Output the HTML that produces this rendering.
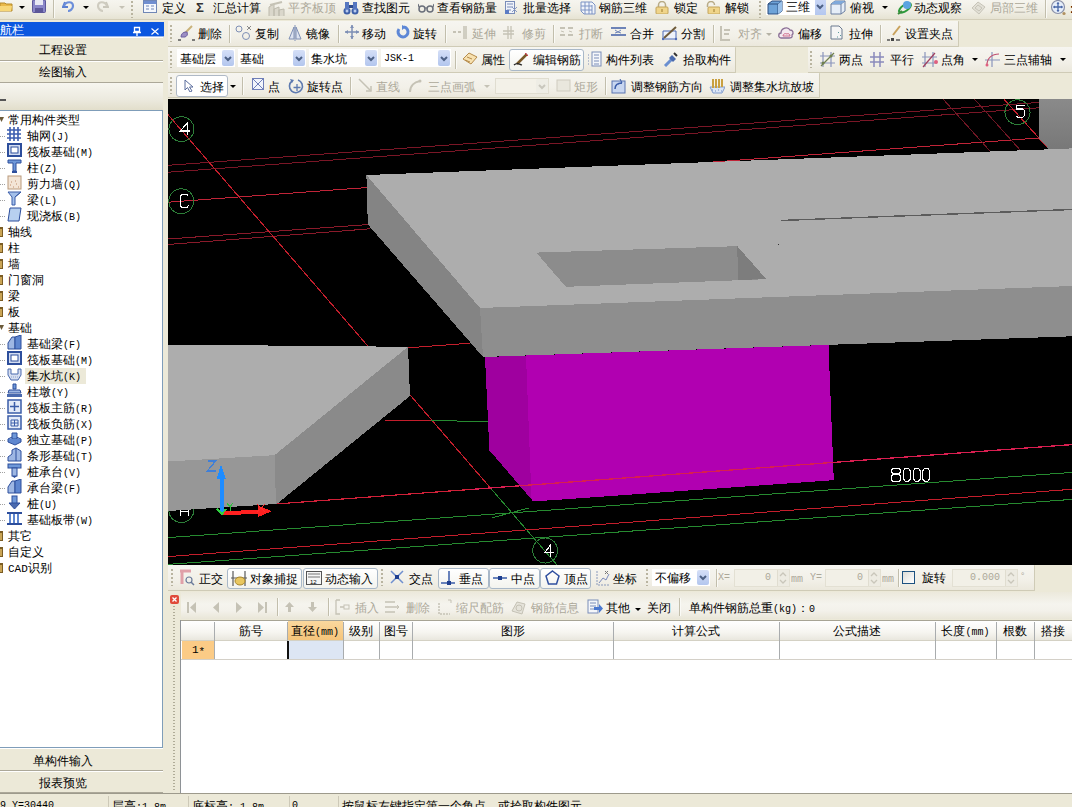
<!DOCTYPE html><html><head><meta charset="utf-8"><title>GGJ</title><style>
*{margin:0;padding:0;box-sizing:border-box}
html,body{width:1072px;height:807px;overflow:hidden}
body{background:#ECE9D8;font-family:"Liberation Sans",sans-serif;font-size:12px;color:#000;position:relative}
.a{position:absolute}
.t{position:absolute;white-space:nowrap;line-height:14px;height:14px}
.m{font-family:"Liberation Mono",monospace;font-size:10px}
.d{color:#ACA899}
.tb{position:absolute;background:linear-gradient(#F6F5F0,#F2F0E8 60%,#EBE8DC);border-bottom:1px solid #CFCBB6;border-right:1px solid #CFCBB6;border-radius:0 1px 1px 0}
.grip{position:absolute;width:2px;background:repeating-linear-gradient(#B9B4A0 0 2px,transparent 2px 4px)}
.sep{position:absolute;width:2px;background:#C2BEAC;border-right:1px solid #FAFAF6}
.btn{position:absolute;border:1px solid #A9B8C8;border-radius:3px;background:linear-gradient(#FFFFFF,#F3F3EE)}
.ic{position:absolute}
.tri{position:absolute;width:0;height:0;border-left:3px solid transparent;border-right:3px solid transparent;border-top:3px solid #000}
</style></head><body>
<div class="a" style="left:0;top:0;width:1072px;height:20px;background:linear-gradient(#F6F5EF,#EFEDE3 60%,#E6E3D3);border-bottom:1px solid #D3CEB9"></div>
<svg class="ic" style="left:0px;top:0px;" width="13" height="12" viewBox="0 0 13 12"><path d="M0 3h5l1 1h6v7H0z" fill="#E9B949" stroke="#B58A2A"/><path d="M0 6h12l-1 5H0z" fill="#F7D778"/></svg>
<div class="tri" style="left:19px;top:6px;border-top-color:#000"></div>
<svg class="ic" style="left:32px;top:0px;" width="14" height="13" viewBox="0 0 14 13"><rect x="0.5" y="0" width="13" height="12.5" rx="1" fill="#8A86C8" stroke="#5C5799"/><rect x="3" y="0" width="8" height="5" fill="#E8E8F4"/><rect x="3" y="8" width="8" height="4.5" fill="#5C5799"/></svg>
<div class="sep" style="left:53px;top:0px;height:18px"></div>
<svg class="ic" style="left:62px;top:0px;" width="13" height="12" viewBox="0 0 13 12"><path d="M3 2 L1 7 L6 7" fill="none" stroke="#5B7FD0" stroke-width="2"/><path d="M2 6 C4 1,11 1,11 6 C11 9,8 11,6 11" fill="none" stroke="#6D8FDA" stroke-width="2.2"/></svg>
<div class="tri" style="left:83px;top:6px;border-top-color:#000"></div>
<svg class="ic" style="left:97px;top:0px;" width="12" height="12" viewBox="0 0 12 12"><path d="M9 2 L11 7 L6 7" fill="none" stroke="#C9C6BA" stroke-width="2"/><path d="M10 6 C8 1,1 1,1 6 C1 9,4 11,6 11" fill="none" stroke="#CFCCC0" stroke-width="2.2"/></svg>
<div class="tri" style="left:119px;top:6px;border-top-color:#C5C2B5"></div>
<div class="grip" style="left:131px;top:1px;height:17px"></div>
<svg class="ic" style="left:143px;top:0px;" width="14" height="13" viewBox="0 0 14 13"><rect x="0.5" y="0.5" width="13" height="12" fill="#F4F7FC" stroke="#6F86B5"/><rect x="1" y="1" width="12" height="3" fill="#6F8ED0"/><path d="M3 6h3M8 6h3M3 9h3M8 9h3" stroke="#6F86B5" stroke-width="1.2"/></svg>
<div class="t " style="left:162px;top:1px;">定义</div>
<div class="t" style="left:196px;top:1px;font-size:13px;font-weight:bold;color:#333">&Sigma;</div>
<div class="t " style="left:213px;top:1px;">汇总计算</div>
<svg class="ic" style="left:268px;top:1px;" width="17" height="16" viewBox="0 0 17 16"><path d="M1 15V6l5-3v12M6 15V8l5-2v9M11 15V9l5-1v7" fill="#DAD7CB" stroke="#BDBAAD"/><path d="M2 4 L14 1" stroke="#C5C2B5" stroke-width="2"/></svg>
<div class="t d" style="left:288px;top:1px;">平齐板顶</div>
<svg class="ic" style="left:343px;top:1px;" width="16" height="14" viewBox="0 0 16 14"><circle cx="4" cy="10" r="3.5" fill="#3D5FA8"/><circle cx="12" cy="10" r="3.5" fill="#3D5FA8"/><rect x="2" y="1" width="4" height="8" fill="#5677C0"/><rect x="10" y="1" width="4" height="8" fill="#5677C0"/><rect x="6" y="4" width="4" height="3" fill="#2F4B8C"/><circle cx="4" cy="10" r="1.5" fill="#B9CBEF"/><circle cx="12" cy="10" r="1.5" fill="#B9CBEF"/></svg>
<div class="t " style="left:362px;top:1px;">查找图元</div>
<svg class="ic" style="left:418px;top:3px;" width="16" height="10" viewBox="0 0 16 10"><circle cx="4" cy="6" r="3" fill="none" stroke="#6A6F7A" stroke-width="1.5"/><circle cx="12" cy="6" r="3" fill="none" stroke="#6A6F7A" stroke-width="1.5"/><path d="M7 5h2M1 4L0 1M15 4l1-3" stroke="#6A6F7A" stroke-width="1.2"/></svg>
<div class="t " style="left:437px;top:1px;">查看钢筋量</div>
<svg class="ic" style="left:505px;top:0px;" width="13" height="15" viewBox="0 0 13 15"><rect x="0.5" y="1.5" width="9" height="12" fill="#F0F3FA" stroke="#7A8DB8"/><path d="M2 4h6M2 7h6M2 10h4" stroke="#7A8DB8"/><rect x="0" y="10" width="4" height="4" fill="#5C7CC4"/><path d="M7 7l5 5M12 7l-5 5" stroke="#8A9AC4"/></svg>
<div class="t " style="left:523px;top:1px;">批量选择</div>
<svg class="ic" style="left:580px;top:0px;" width="16" height="15" viewBox="0 0 16 15"><path d="M1 2h11l3 3v9H4L1 11z" fill="#F1F4FA" stroke="#7C93C4"/><path d="M1 6h11M1 10h11M5 2v12M9 2v12M12 5v9" stroke="#7C93C4"/></svg>
<div class="t " style="left:599px;top:1px;">钢筋三维</div>
<svg class="ic" style="left:655px;top:1px;" width="14" height="13" viewBox="0 0 14 13"><path d="M3.5 6V4a3.5 3.5 0 0 1 7 0v2" fill="none" stroke="#B8AB86" stroke-width="1.5"/><rect x="1" y="6" width="12" height="7" rx="1" fill="#F0D58A" stroke="#C2A45C"/><path d="M7 8v3" stroke="#9C7A2C"/></svg>
<div class="t " style="left:674px;top:1px;">锁定</div>
<svg class="ic" style="left:706px;top:1px;" width="14" height="13" viewBox="0 0 14 13"><path d="M1.5 6V4a3.5 3.5 0 0 1 7 0" fill="none" stroke="#B8AB86" stroke-width="1.5"/><rect x="2" y="6" width="12" height="7" rx="1" fill="#F0D58A" stroke="#C2A45C"/><path d="M8 8v3" stroke="#9C7A2C"/></svg>
<div class="t " style="left:725px;top:1px;">解锁</div>
<div class="grip" style="left:759px;top:1px;height:17px"></div>
<div class="a" style="left:766px;top:0;width:60px;height:15px;background:#fff"></div>
<svg class="ic" style="left:767px;top:0px;" width="16" height="15" viewBox="0 0 16 15"><path d="M1 4l4-3h10v10l-4 3H1z" fill="#6EA3D8" stroke="#2C4C7C"/><path d="M1 4h10v10M11 4l4-3" fill="none" stroke="#2C4C7C"/><path d="M11 4v10l4-3V1z" fill="#9CC2EA"/></svg>
<div class="t " style="left:786px;top:0px;">三维</div>
<div class="a" style="left:814px;top:0;width:12px;height:15px;background:linear-gradient(#C9D6F5,#B4C7EF);border-left:1px solid #fff"></div>
<svg class="ic" style="left:816px;top:4px;" width="8" height="6" viewBox="0 0 8 6"><path d="M1 1l3 3 3-3" fill="none" stroke="#4D6185" stroke-width="2"/></svg>
<svg class="ic" style="left:830px;top:0px;" width="16" height="15" viewBox="0 0 16 15"><path d="M1 4l4-3h10v10l-4 3H1z" fill="#E6EEF8" stroke="#6B7EA0"/><path d="M1 4h10v10M11 4l4-3" fill="none" stroke="#6B7EA0"/><path d="M1 4l4-3h10l-4 3z" fill="#7FA9DB"/></svg>
<div class="t " style="left:850px;top:1px;">俯视</div>
<div class="tri" style="left:882px;top:6px;border-top-color:#000"></div>
<svg class="ic" style="left:897px;top:0px;" width="16" height="16" viewBox="0 0 16 16"><ellipse cx="8" cy="8" rx="7" ry="3" transform="rotate(-35 8 8)" fill="none" stroke="#2C9A3C" stroke-width="2"/><circle cx="10" cy="5" r="4" fill="#5BA3E0"/><path d="M1 14l4-3" stroke="#3C8C3C" stroke-width="2"/></svg>
<div class="t " style="left:914px;top:1px;">动态观察</div>
<svg class="ic" style="left:970px;top:0px;" width="16" height="16" viewBox="0 0 16 16"><path d="M2 8l6-6 7 5-6 7z" fill="#E2E0D6" stroke="#C7C4B8"/><path d="M5 8l3-3 4 3-3 3z" fill="none" stroke="#C7C4B8"/></svg>
<div class="t d" style="left:990px;top:1px;">局部三维</div>
<div class="sep" style="left:1045px;top:0px;height:18px"></div>
<svg class="ic" style="left:1050px;top:0px;" width="17" height="16" viewBox="0 0 17 16"><circle cx="8" cy="7" r="6.5" fill="#E6EEFA" stroke="#8A90A8" stroke-width="1.2"/><path d="M8 2.5v9M3.5 7h9" stroke="#4A68A8" stroke-width="1.3"/><path d="M8 2l-1.5 2h3zM8 12l-1.5-2h3zM3 7l2-1.5v3zM13 7l-2-1.5v3z" fill="#4A68A8"/><circle cx="14" cy="13.5" r="1.6" fill="#B09060"/></svg>
<div class="t" style="left:1070px;top:2px;font-weight:bold">:</div>
<div class="a" style="left:0;top:22px;width:164px;height:15px;background:#0B57E0;border-bottom:1px solid #9DB9EB"></div>
<div class="t" style="left:0;top:23px;color:#fff">航栏</div>
<svg class="ic" style="left:133px;top:26px;" width="8" height="10" viewBox="0 0 8 10"><path d="M1.5 1.5h5v4h-5z" stroke="#fff" stroke-width="1.3" fill="none"/><path d="M0 6.5h8M4 6v4" stroke="#fff" stroke-width="1.3"/></svg>
<svg class="ic" style="left:151px;top:28px;" width="8" height="7" viewBox="0 0 8 7"><path d="M0.5 0.5l7 6M7.5 0.5l-7 6" stroke="#fff" stroke-width="1.1"/></svg>
<div class="a" style="left:0;top:37px;width:163px;height:24px;background:#ECE9D8;border-top:1px solid #fff;border-bottom:1px solid #ACA899"></div>
<div class="t " style="left:39px;top:43px;">工程设置</div>
<div class="a" style="left:0;top:61px;width:163px;height:22px;background:#ECE9D8;border-top:1px solid #fff;border-bottom:1px solid #ACA899"></div>
<div class="t " style="left:39px;top:65px;">绘图输入</div>
<div class="a" style="left:0;top:83px;width:163px;height:27px;background:linear-gradient(#F7F6F0,#ECEADF 60%,#E2DECB)"></div>
<div class="a" style="left:0;top:99px;width:6px;height:2px;background:#555"></div>
<div class="a" style="left:0;top:110px;width:163px;height:638px;background:#fff;border-top:1px solid #7F9DB9;border-right:1px solid #7F9DB9;border-bottom:1px solid #7F9DB9"></div>
<div class="a" style="left:25px;top:368px;width:61px;height:16px;background:#ECE9D8"></div>
<svg class="ic" style="left:0px;top:117px;" width="4" height="6" viewBox="0 0 4 6"><path d="M-1 0h5L1.5 5z" fill="#6B5A3A"/></svg>
<div class="t " style="left:8px;top:113px;">常用构件类型</div>
<div class="a" style="left:0;top:136px;width:6px;height:1px;background:repeating-linear-gradient(90deg,#A0A0A0 0 1px,transparent 1px 2px)"></div>
<svg class="ic" style="left:7px;top:127px;" width="15" height="15" viewBox="0 0 15 15"><path d="M3 0v14M7 0v14M11 0v14M0 3h14M0 7h14M0 11h14" stroke="#3B5DB0" stroke-width="1.6"/></svg>
<div class="t" style="left:27px;top:129px">轴网<span class="m">(J)</span></div>
<div class="a" style="left:0;top:152px;width:6px;height:1px;background:repeating-linear-gradient(90deg,#A0A0A0 0 1px,transparent 1px 2px)"></div>
<svg class="ic" style="left:7px;top:143px;" width="15" height="15" viewBox="0 0 15 15"><rect x="1" y="1" width="13" height="12" fill="#D3DDF2" stroke="#2D4E9C" stroke-width="2"/><rect x="4" y="4" width="7" height="6" fill="#fff" stroke="#2D4E9C"/></svg>
<div class="t" style="left:27px;top:145px">筏板基础<span class="m">(M)</span></div>
<div class="a" style="left:0;top:168px;width:6px;height:1px;background:repeating-linear-gradient(90deg,#A0A0A0 0 1px,transparent 1px 2px)"></div>
<svg class="ic" style="left:7px;top:159px;" width="15" height="15" viewBox="0 0 15 15"><path d="M1 1h13v3H9v8H6V4H1z" fill="#6F98D8" stroke="#2D4E9C"/><rect x="5" y="12" width="5" height="2" fill="#2D4E9C"/></svg>
<div class="t" style="left:27px;top:161px">柱<span class="m">(Z)</span></div>
<div class="a" style="left:0;top:184px;width:6px;height:1px;background:repeating-linear-gradient(90deg,#A0A0A0 0 1px,transparent 1px 2px)"></div>
<svg class="ic" style="left:7px;top:175px;" width="15" height="15" viewBox="0 0 15 15"><rect x="1" y="1" width="13" height="13" fill="#F3E5D6" stroke="#B99A7D"/><path d="M3 10h1M6 12h1M9 9h1M11 12h1M4 7h1M8 6h1" stroke="#C08C6A"/></svg>
<div class="t" style="left:27px;top:177px">剪力墙<span class="m">(Q)</span></div>
<div class="a" style="left:0;top:200px;width:6px;height:1px;background:repeating-linear-gradient(90deg,#A0A0A0 0 1px,transparent 1px 2px)"></div>
<svg class="ic" style="left:7px;top:191px;" width="15" height="15" viewBox="0 0 15 15"><path d="M1 1h13L8 6v8H5V6z" fill="#A4C0EA" stroke="#3A5CA8"/><path d="M8 6l6-5" stroke="#3A5CA8"/></svg>
<div class="t" style="left:27px;top:193px">梁<span class="m">(L)</span></div>
<div class="a" style="left:0;top:216px;width:6px;height:1px;background:repeating-linear-gradient(90deg,#A0A0A0 0 1px,transparent 1px 2px)"></div>
<svg class="ic" style="left:7px;top:207px;" width="15" height="15" viewBox="0 0 15 15"><path d="M3 1h11l-2 13H1z" fill="#B7D0F0" stroke="#2D4E9C"/></svg>
<div class="t" style="left:27px;top:209px">现浇板<span class="m">(B)</span></div>
<svg class="ic" style="left:0px;top:226px;" width="4" height="11" viewBox="0 0 4 11"><rect x="0" y="1" width="3" height="10" fill="#7A5C24"/><rect x="0" y="3" width="2" height="7" fill="#C9A455"/></svg>
<div class="t " style="left:8px;top:225px;">轴线</div>
<svg class="ic" style="left:0px;top:242px;" width="4" height="11" viewBox="0 0 4 11"><rect x="0" y="1" width="3" height="10" fill="#7A5C24"/><rect x="0" y="3" width="2" height="7" fill="#C9A455"/></svg>
<div class="t " style="left:8px;top:241px;">柱</div>
<svg class="ic" style="left:0px;top:258px;" width="4" height="11" viewBox="0 0 4 11"><rect x="0" y="1" width="3" height="10" fill="#7A5C24"/><rect x="0" y="3" width="2" height="7" fill="#C9A455"/></svg>
<div class="t " style="left:8px;top:257px;">墙</div>
<svg class="ic" style="left:0px;top:274px;" width="4" height="11" viewBox="0 0 4 11"><rect x="0" y="1" width="3" height="10" fill="#7A5C24"/><rect x="0" y="3" width="2" height="7" fill="#C9A455"/></svg>
<div class="t " style="left:8px;top:273px;">门窗洞</div>
<svg class="ic" style="left:0px;top:290px;" width="4" height="11" viewBox="0 0 4 11"><rect x="0" y="1" width="3" height="10" fill="#7A5C24"/><rect x="0" y="3" width="2" height="7" fill="#C9A455"/></svg>
<div class="t " style="left:8px;top:289px;">梁</div>
<svg class="ic" style="left:0px;top:306px;" width="4" height="11" viewBox="0 0 4 11"><rect x="0" y="1" width="3" height="10" fill="#7A5C24"/><rect x="0" y="3" width="2" height="7" fill="#C9A455"/></svg>
<div class="t " style="left:8px;top:305px;">板</div>
<svg class="ic" style="left:0px;top:325px;" width="4" height="6" viewBox="0 0 4 6"><path d="M-1 0h5L1.5 5z" fill="#6B5A3A"/></svg>
<div class="t " style="left:8px;top:321px;">基础</div>
<div class="a" style="left:0;top:344px;width:6px;height:1px;background:repeating-linear-gradient(90deg,#A0A0A0 0 1px,transparent 1px 2px)"></div>
<svg class="ic" style="left:7px;top:335px;" width="15" height="15" viewBox="0 0 15 15"><path d="M1 14V8l4-6h3v12z" fill="#9EB7E3" stroke="#2D4E9C"/><path d="M8 2l6-2v14H8z" fill="#5E86CF" stroke="#2D4E9C"/></svg>
<div class="t" style="left:27px;top:337px">基础梁<span class="m">(F)</span></div>
<div class="a" style="left:0;top:360px;width:6px;height:1px;background:repeating-linear-gradient(90deg,#A0A0A0 0 1px,transparent 1px 2px)"></div>
<svg class="ic" style="left:7px;top:351px;" width="15" height="15" viewBox="0 0 15 15"><rect x="1" y="1" width="13" height="12" fill="#D3DDF2" stroke="#2D4E9C" stroke-width="2"/><rect x="4" y="4" width="7" height="6" fill="#fff" stroke="#2D4E9C"/></svg>
<div class="t" style="left:27px;top:353px">筏板基础<span class="m">(M)</span></div>
<div class="a" style="left:0;top:376px;width:6px;height:1px;background:repeating-linear-gradient(90deg,#A0A0A0 0 1px,transparent 1px 2px)"></div>
<svg class="ic" style="left:7px;top:367px;" width="15" height="15" viewBox="0 0 15 15"><path d="M1 2h3v5h7V2h3v6l-3 5H4L1 8z" fill="#D6DEF0" stroke="#4A6AAE"/><path d="M4 10h7" stroke="#8AA0CC" stroke-dasharray="1 1"/></svg>
<div class="t" style="left:27px;top:369px">集水坑<span class="m">(K)</span></div>
<div class="a" style="left:0;top:392px;width:6px;height:1px;background:repeating-linear-gradient(90deg,#A0A0A0 0 1px,transparent 1px 2px)"></div>
<svg class="ic" style="left:7px;top:383px;" width="15" height="15" viewBox="0 0 15 15"><path d="M6 1h3v5H6z" fill="#6F98D8" stroke="#2D4E9C"/><path d="M2 7h11l1 3H1z" fill="#9EB7E3" stroke="#2D4E9C"/><rect x="0" y="11" width="15" height="3" fill="#4A6AAE"/></svg>
<div class="t" style="left:27px;top:385px">柱墩<span class="m">(Y)</span></div>
<div class="a" style="left:0;top:408px;width:6px;height:1px;background:repeating-linear-gradient(90deg,#A0A0A0 0 1px,transparent 1px 2px)"></div>
<svg class="ic" style="left:7px;top:399px;" width="15" height="15" viewBox="0 0 15 15"><rect x="1" y="1" width="13" height="13" fill="#E4EBF8" stroke="#3A5CA8" stroke-width="1.5"/><path d="M7.5 3v9M3 7.5h9" stroke="#3A5CA8" stroke-width="1.5"/></svg>
<div class="t" style="left:27px;top:401px">筏板主筋<span class="m">(R)</span></div>
<div class="a" style="left:0;top:424px;width:6px;height:1px;background:repeating-linear-gradient(90deg,#A0A0A0 0 1px,transparent 1px 2px)"></div>
<svg class="ic" style="left:7px;top:415px;" width="15" height="15" viewBox="0 0 15 15"><rect x="1" y="1" width="13" height="13" fill="#E4EBF8" stroke="#3A5CA8" stroke-width="1.5"/><path d="M4 5h7v6H4zM7.5 5v6M4 8h7" fill="none" stroke="#3A5CA8"/></svg>
<div class="t" style="left:27px;top:417px">筏板负筋<span class="m">(X)</span></div>
<div class="a" style="left:0;top:440px;width:6px;height:1px;background:repeating-linear-gradient(90deg,#A0A0A0 0 1px,transparent 1px 2px)"></div>
<svg class="ic" style="left:7px;top:431px;" width="15" height="15" viewBox="0 0 15 15"><path d="M1 8l6-3 7 3-6 4z" fill="#9EB7E3" stroke="#2D4E9C"/><path d="M5 2h5v6H5z" fill="#6F98D8" stroke="#2D4E9C"/><path d="M1 8v3l7 3 6-3V8" fill="#5E86CF" stroke="#2D4E9C"/></svg>
<div class="t" style="left:27px;top:433px">独立基础<span class="m">(P)</span></div>
<div class="a" style="left:0;top:456px;width:6px;height:1px;background:repeating-linear-gradient(90deg,#A0A0A0 0 1px,transparent 1px 2px)"></div>
<svg class="ic" style="left:7px;top:447px;" width="15" height="15" viewBox="0 0 15 15"><path d="M1 14v-4l4-3V3l4-2 5 3v10z" fill="#9EB7E3" stroke="#2D4E9C"/><path d="M9 1v13" stroke="#2D4E9C"/></svg>
<div class="t" style="left:27px;top:449px">条形基础<span class="m">(T)</span></div>
<div class="a" style="left:0;top:472px;width:6px;height:1px;background:repeating-linear-gradient(90deg,#A0A0A0 0 1px,transparent 1px 2px)"></div>
<svg class="ic" style="left:7px;top:463px;" width="15" height="15" viewBox="0 0 15 15"><rect x="1" y="1" width="13" height="4" fill="#6F98D8" stroke="#2D4E9C"/><rect x="5" y="5" width="5" height="8" fill="#9EB7E3" stroke="#2D4E9C"/><path d="M5 13h5l-2.5 2z" fill="#2D4E9C"/></svg>
<div class="t" style="left:27px;top:465px">桩承台<span class="m">(V)</span></div>
<div class="a" style="left:0;top:488px;width:6px;height:1px;background:repeating-linear-gradient(90deg,#A0A0A0 0 1px,transparent 1px 2px)"></div>
<svg class="ic" style="left:7px;top:479px;" width="15" height="15" viewBox="0 0 15 15"><path d="M1 14V8l4-6h3v12z" fill="#9EB7E3" stroke="#2D4E9C"/><path d="M8 2l6-2v14H8z" fill="#5E86CF" stroke="#2D4E9C"/></svg>
<div class="t" style="left:27px;top:481px">承台梁<span class="m">(F)</span></div>
<div class="a" style="left:0;top:504px;width:6px;height:1px;background:repeating-linear-gradient(90deg,#A0A0A0 0 1px,transparent 1px 2px)"></div>
<svg class="ic" style="left:7px;top:495px;" width="15" height="15" viewBox="0 0 15 15"><rect x="5" y="1" width="5" height="8" fill="#6F98D8" stroke="#2D4E9C"/><path d="M2 8h11l-5.5 6z" fill="#4A6AAE" stroke="#2D4E9C"/></svg>
<div class="t" style="left:27px;top:497px">桩<span class="m">(U)</span></div>
<div class="a" style="left:0;top:520px;width:6px;height:1px;background:repeating-linear-gradient(90deg,#A0A0A0 0 1px,transparent 1px 2px)"></div>
<svg class="ic" style="left:7px;top:511px;" width="15" height="15" viewBox="0 0 15 15"><path d="M0 2h15M0 13h15" stroke="#2D4E9C" stroke-width="2"/><path d="M3 3v9M7 3v9M11 3v9" stroke="#5E86CF" stroke-width="2"/></svg>
<div class="t" style="left:27px;top:513px">基础板带<span class="m">(W)</span></div>
<svg class="ic" style="left:0px;top:530px;" width="4" height="11" viewBox="0 0 4 11"><rect x="0" y="1" width="3" height="10" fill="#7A5C24"/><rect x="0" y="3" width="2" height="7" fill="#C9A455"/></svg>
<div class="t " style="left:8px;top:529px;">其它</div>
<svg class="ic" style="left:0px;top:546px;" width="4" height="11" viewBox="0 0 4 11"><rect x="0" y="1" width="3" height="10" fill="#7A5C24"/><rect x="0" y="3" width="2" height="7" fill="#C9A455"/></svg>
<div class="t " style="left:8px;top:545px;">自定义</div>
<svg class="ic" style="left:0px;top:562px;" width="4" height="11" viewBox="0 0 4 11"><rect x="0" y="1" width="3" height="10" fill="#7A5C24"/><rect x="0" y="3" width="2" height="7" fill="#C9A455"/></svg>
<div class="t" style="left:8px;top:561px"><span class="m" style="font-size:11px">CAD</span>识别</div>
<div class="a" style="left:0;top:748px;width:163px;height:23px;background:#ECE9D8;border-top:1px solid #fff;border-bottom:1px solid #ACA899"></div>
<div class="t " style="left:33px;top:754px;">单构件输入</div>
<div class="a" style="left:0;top:771px;width:163px;height:22px;background:#ECE9D8;border-top:1px solid #fff;border-bottom:1px solid #ACA899"></div>
<div class="t " style="left:39px;top:776px;">报表预览</div>
<div class="tb" style="left:168px;top:21px;width:791px;height:26px"></div>
<div class="grip" style="left:170px;top:25px;height:17px"></div>
<svg class="ic" style="left:178px;top:25px;" width="17" height="17" viewBox="0 0 17 17"><path d="M14 1L6 9" stroke="#C9B27A" stroke-width="2"/><path d="M8 7c-3 0-5 2-5 5l4 0c2-1 3-2 2-5z" fill="#9C8EC4" stroke="#6D5FA0"/><path d="M0 15h3M14 15h3" stroke="#555" stroke-width="1.5"/></svg>
<div class="t " style="left:198px;top:27px;">删除</div>
<svg class="ic" style="left:235px;top:25px;" width="17" height="17" viewBox="0 0 17 17"><circle cx="4" cy="4" r="3" fill="none" stroke="#7E8FB5"/><circle cx="11" cy="11" r="3.5" fill="none" stroke="#7E8FB5"/><path d="M12 1l4 4M16 1l-4 4" stroke="#888"/></svg>
<div class="t " style="left:255px;top:27px;">复制</div>
<svg class="ic" style="left:288px;top:25px;" width="17" height="17" viewBox="0 0 17 17"><path d="M1 14L6 2v12zM13 14L8 2v12z" fill="#DDE3F0" stroke="#7E8FB5"/><path d="M7 0v16" stroke="#7E8FB5"/></svg>
<div class="t " style="left:306px;top:27px;">镜像</div>
<svg class="ic" style="left:345px;top:25px;" width="17" height="17" viewBox="0 0 17 17"><path d="M7 0v14M0 7h14" stroke="#7E8FB5" stroke-width="1.5"/><path d="M7 0l-2 3h4zM7 14l-2-3h4zM0 7l3-2v4zM14 7l-3-2v4z" fill="#7E8FB5"/></svg>
<div class="t " style="left:362px;top:27px;">移动</div>
<svg class="ic" style="left:396px;top:25px;" width="17" height="17" viewBox="0 0 17 17"><path d="M3 4a5 5 0 1 0 5-2" fill="none" stroke="#5D87D6" stroke-width="3"/><path d="M6 0l4 2-4 3z" fill="#5D87D6"/></svg>
<div class="t " style="left:413px;top:27px;">旋转</div>
<svg class="ic" style="left:452px;top:25px;" width="17" height="17" viewBox="0 0 17 17"><path d="M1 7h3M6 7h3" stroke="#C5C2B5" stroke-width="2"/><path d="M12 1v13M14 1v13" stroke="#C5C2B5" stroke-width="1.5"/></svg>
<div class="t d" style="left:472px;top:27px;">延伸</div>
<svg class="ic" style="left:503px;top:25px;" width="17" height="17" viewBox="0 0 17 17"><path d="M0 6h11M0 9h11" stroke="#C5C2B5" stroke-width="1.3"/><path d="M5 1v13M8 1v13" stroke="#C5C2B5" stroke-width="1.3"/></svg>
<div class="t d" style="left:522px;top:27px;">修剪</div>
<svg class="ic" style="left:560px;top:25px;" width="17" height="17" viewBox="0 0 17 17"><path d="M0 3h5M8 3h5M0 10h5M8 10h5" stroke="#C5C2B5" stroke-width="2"/><path d="M1 6l3 1M9 6l3 1" stroke="#C5C2B5"/></svg>
<div class="t d" style="left:579px;top:27px;">打断</div>
<svg class="ic" style="left:611px;top:25px;" width="17" height="17" viewBox="0 0 17 17"><path d="M0 3h15M0 10h15" stroke="#6E84B8" stroke-width="2"/><path d="M4 5l3 2 3-2M4 8l3-1 3 1" fill="none" stroke="#6E84B8"/></svg>
<div class="t " style="left:630px;top:27px;">合并</div>
<svg class="ic" style="left:662px;top:25px;" width="17" height="17" viewBox="0 0 17 17"><path d="M1 6h13v8H1z" fill="#EEF2FA" stroke="#4D6AB8"/><path d="M2 13L14 2" stroke="#6E5A3A" stroke-width="2"/><circle cx="1" cy="14" r="1.2" fill="#4D6AB8"/><circle cx="14" cy="14" r="1.2" fill="#4D6AB8"/></svg>
<div class="t " style="left:681px;top:27px;">分割</div>
<svg class="ic" style="left:720px;top:25px;" width="17" height="17" viewBox="0 0 17 17"><path d="M1 1v14h9" fill="none" stroke="#C5C2B5" stroke-width="2"/><path d="M4 5h6M4 9h5" stroke="#C5C2B5" stroke-width="2"/></svg>
<div class="t d" style="left:738px;top:27px;">对齐</div>
<svg class="ic" style="left:778px;top:25px;" width="17" height="17" viewBox="0 0 17 17"><path d="M3 13c-3 0-3-5 0-5 0-5 7-7 9-3 3 0 4 3 2 5 1 3-2 3-3 3z" fill="#F3E9F0" stroke="#8B6F96" stroke-width="1.3"/><path d="M5 11c0-2 2-3 4-2 1-1 3 0 3 2z" fill="none" stroke="#D06A8A"/></svg>
<div class="t " style="left:798px;top:27px;">偏移</div>
<svg class="ic" style="left:830px;top:25px;" width="17" height="17" viewBox="0 0 17 17"><path d="M1 1h8l3 3v10H1z" fill="#F5F5F5" stroke="#6B7A90"/><path d="M8 7l1 1M10 10l1 1M7 12h1" stroke="#5A9A9A"/></svg>
<div class="t " style="left:849px;top:27px;">拉伸</div>
<svg class="ic" style="left:886px;top:25px;" width="17" height="17" viewBox="0 0 17 17"><path d="M14 1L7 10" stroke="#C9A25C" stroke-width="2"/><path d="M1 15h3M10 15h4" stroke="#555" stroke-width="1.3"/><rect x="5" y="13" width="3" height="3" fill="#444"/></svg>
<div class="t " style="left:905px;top:27px;">设置夹点</div>
<div class="tri" style="left:766px;top:33px;border-top-color:#B5B2A5"></div>
<div class="sep" style="left:229px;top:25px;height:18px"></div>
<div class="sep" style="left:338px;top:25px;height:18px"></div>
<div class="sep" style="left:445px;top:25px;height:18px"></div>
<div class="sep" style="left:553px;top:25px;height:18px"></div>
<div class="sep" style="left:713px;top:25px;height:18px"></div>
<div class="sep" style="left:880px;top:25px;height:18px"></div>
<div class="tb" style="left:168px;top:47px;width:568px;height:26px"></div>
<div class="grip" style="left:170px;top:51px;height:17px"></div>
<div class="a" style="left:177px;top:49px;width:58px;height:18px;background:#fff"></div>
<div class="a" style="left:222px;top:50px;width:12px;height:16px;background:linear-gradient(#D5DFF7,#B3C6EE);border-radius:2px"></div>
<svg class="ic" style="left:224px;top:56px;" width="8" height="6" viewBox="0 0 8 6"><path d="M1 1l3 3 3-3" fill="none" stroke="#4D6185" stroke-width="2"/></svg>
<div class="t " style="left:180px;top:52px;">基础层</div>
<div class="a" style="left:238px;top:49px;width:68px;height:18px;background:#fff"></div>
<div class="a" style="left:293px;top:50px;width:12px;height:16px;background:linear-gradient(#D5DFF7,#B3C6EE);border-radius:2px"></div>
<svg class="ic" style="left:295px;top:56px;" width="8" height="6" viewBox="0 0 8 6"><path d="M1 1l3 3 3-3" fill="none" stroke="#4D6185" stroke-width="2"/></svg>
<div class="t " style="left:240px;top:52px;">基础</div>
<div class="a" style="left:309px;top:49px;width:69px;height:18px;background:#fff"></div>
<div class="a" style="left:365px;top:50px;width:12px;height:16px;background:linear-gradient(#D5DFF7,#B3C6EE);border-radius:2px"></div>
<svg class="ic" style="left:367px;top:56px;" width="8" height="6" viewBox="0 0 8 6"><path d="M1 1l3 3 3-3" fill="none" stroke="#4D6185" stroke-width="2"/></svg>
<div class="t " style="left:311px;top:52px;">集水坑</div>
<div class="a" style="left:381px;top:49px;width:70px;height:18px;background:#fff"></div>
<div class="a" style="left:438px;top:50px;width:12px;height:16px;background:linear-gradient(#D5DFF7,#B3C6EE);border-radius:2px"></div>
<svg class="ic" style="left:440px;top:56px;" width="8" height="6" viewBox="0 0 8 6"><path d="M1 1l3 3 3-3" fill="none" stroke="#4D6185" stroke-width="2"/></svg>
<div class="t m" style="left:384px;top:52px;font-size:10px">JSK-1</div>
<div class="sep" style="left:455px;top:51px;height:18px"></div>
<div class="btn" style="left:509px;top:49px;width:75px;height:22px"></div>
<svg class="ic" style="left:462px;top:51px;" width="16" height="16" viewBox="0 0 16 16"><path d="M1 8l6-6 8 4-6 7z" fill="#F7E1B0" stroke="#B58A4A"/><path d="M3 9l5 2M5 6l5 2" stroke="#B58A4A"/></svg>
<div class="t " style="left:481px;top:53px;">属性</div>
<svg class="ic" style="left:513px;top:51px;" width="16" height="16" viewBox="0 0 16 16"><path d="M4 13L14 3" stroke="#7A5A2A" stroke-width="2.5"/><path d="M1 14c3-3 5-1 8 0" fill="none" stroke="#222" stroke-width="1.3"/><path d="M12 2l3 3" stroke="#D35"/></svg>
<div class="t " style="left:533px;top:53px;">编辑钢筋</div>
<svg class="ic" style="left:587px;top:51px;" width="16" height="16" viewBox="0 0 16 16"><rect x="5" y="1" width="9" height="14" fill="#F4F6FA" stroke="#7A8DB8"/><path d="M7 4h5M7 7h5M7 10h5M7 13h5" stroke="#7A8DB8"/><path d="M1 4h2M1 7h2M1 10h2M1 13h2" stroke="#7A8DB8" stroke-dasharray="1 1"/></svg>
<div class="t " style="left:606px;top:53px;">构件列表</div>
<svg class="ic" style="left:663px;top:51px;" width="16" height="16" viewBox="0 0 16 16"><path d="M2 15l7-7" stroke="#6A8FD0" stroke-width="3"/><path d="M9 4l4 4-3 3-4-4z" fill="#4A6AAE"/><path d="M11 2l3 3" stroke="#333" stroke-width="2"/></svg>
<div class="t " style="left:683px;top:53px;">拾取构件</div>
<div class="tb" style="left:808px;top:47px;width:270px;height:26px"></div>
<div class="grip" style="left:810px;top:51px;height:17px"></div>
<svg class="ic" style="left:820px;top:52px;" width="16" height="16" viewBox="0 0 16 16"><path d="M3 0v15M11 0v15M0 4h15M0 11h15" stroke="#8A95BC" stroke-width="1.2"/><path d="M1 14L14 1" stroke="#6F7F4F" stroke-width="1.2"/><circle cx="3" cy="11" r="1.5" fill="#6F7F4F"/><circle cx="11" cy="4" r="1.5" fill="#6F7F4F"/></svg>
<div class="t " style="left:839px;top:53px;">两点</div>
<svg class="ic" style="left:870px;top:52px;" width="16" height="16" viewBox="0 0 16 16"><path d="M4 0v15M10 0v15M0 5h14M0 10h14" stroke="#8A8ABC" stroke-width="1.5"/></svg>
<div class="t " style="left:890px;top:53px;">平行</div>
<svg class="ic" style="left:922px;top:52px;" width="16" height="16" viewBox="0 0 16 16"><path d="M3 0v15M11 0v15M0 5h15M0 11h15" stroke="#8A95BC" stroke-width="1.2"/><path d="M1 15L13 1" stroke="#A04060" stroke-width="1.2"/><circle cx="14" cy="10" r="2" fill="#E06080"/></svg>
<div class="t " style="left:941px;top:53px;">点角</div>
<svg class="ic" style="left:985px;top:52px;" width="16" height="16" viewBox="0 0 16 16"><path d="M7 0v15M0 8h15" stroke="#8A95BC" stroke-width="1.2"/><path d="M2 13c0-7 5-11 12-11" fill="none" stroke="#C05070" stroke-width="1.2"/><circle cx="2" cy="13" r="1.5" fill="#E06080"/></svg>
<div class="t " style="left:1004px;top:53px;">三点辅轴</div>
<div class="tri" style="left:972px;top:58px;border-top-color:#000"></div>
<div class="tri" style="left:1060px;top:58px;border-top-color:#000"></div>
<div class="tb" style="left:168px;top:73px;width:652px;height:25px"></div>
<div class="grip" style="left:170px;top:77px;height:17px"></div>
<div class="btn" style="left:176px;top:75px;width:52px;height:22px;border-color:#AFB9C6;background:#fff"></div>
<svg class="ic" style="left:184px;top:79px;" width="9" height="13" viewBox="0 0 9 13"><path d="M1 1v10l2.5-2.5L6 13l2-1-2.5-4H9z" fill="#fff" stroke="#5A6C9C"/></svg>
<div class="t " style="left:200px;top:80px;">选择</div>
<div class="tri" style="left:230px;top:85px;border-top-color:#000"></div>
<div class="sep" style="left:242px;top:77px;height:18px"></div>
<svg class="ic" style="left:252px;top:78px;" width="16" height="16" viewBox="0 0 16 16"><rect x="0.5" y="0.5" width="11" height="11" fill="#F1F4FB" stroke="#6F7FB8"/><path d="M1 1l10 10M11 1L1 11" stroke="#6F7FB8"/></svg>
<div class="t " style="left:268px;top:80px;">点</div>
<svg class="ic" style="left:288px;top:78px;" width="16" height="16" viewBox="0 0 16 16"><path d="M4 3a6.5 6.5 0 1 0 6-1" fill="none" stroke="#5E7AB0" stroke-width="1.6"/><path d="M2 1l4 1-2 3z" fill="#5E7AB0"/><path d="M9 6v7M5.5 9.5h7" stroke="#5E7AB0" stroke-width="1.3"/></svg>
<div class="t " style="left:307px;top:80px;">旋转点</div>
<svg class="ic" style="left:358px;top:78px;" width="16" height="16" viewBox="0 0 16 16"><path d="M1 1l12 12" stroke="#C5C2B5" stroke-width="1.5"/><path d="M13 8v5H8" fill="none" stroke="#C5C2B5" stroke-width="1.5"/></svg>
<div class="t d" style="left:376px;top:80px;">直线</div>
<svg class="ic" style="left:408px;top:78px;" width="16" height="16" viewBox="0 0 16 16"><path d="M2 14c0-6 4-10 10-11" fill="none" stroke="#C5C2B5" stroke-width="2"/><circle cx="12" cy="3" r="1.5" fill="#C5C2B5"/></svg>
<div class="t d" style="left:428px;top:80px;">三点画弧</div>
<svg class="ic" style="left:556px;top:78px;" width="16" height="16" viewBox="0 0 16 16"><rect x="1" y="2" width="13" height="11" fill="#E9E7DD" stroke="#CFCCBF"/></svg>
<div class="t d" style="left:574px;top:80px;">矩形</div>
<svg class="ic" style="left:611px;top:78px;" width="16" height="16" viewBox="0 0 16 16"><rect x="1" y="3" width="13" height="12" fill="#C8D6F0" stroke="#5A74B0"/><path d="M4 11c0-4 3-6 7-6" fill="none" stroke="#3A5CA8" stroke-width="1.5"/><path d="M9 1l2 4-4 1" fill="none" stroke="#3A5CA8"/></svg>
<div class="t " style="left:631px;top:80px;">调整钢筋方向</div>
<svg class="ic" style="left:709px;top:78px;" width="16" height="16" viewBox="0 0 16 16"><path d="M1 9h15l-3 6H4z" fill="#DCE6F5" stroke="#7F9ACC"/><path d="M4 1v9M7 1v9M10 1v9M13 1v8" stroke="#C9A040" stroke-width="2"/><path d="M3 12h1M6 13h1M9 12h1M12 13h1" stroke="#6A8AC0"/></svg>
<div class="t " style="left:730px;top:80px;">调整集水坑放坡</div>
<div class="sep" style="left:350px;top:77px;height:18px"></div>
<div class="sep" style="left:605px;top:77px;height:18px"></div>
<div class="tri" style="left:484px;top:85px;border-top-color:#C5C2B5"></div>
<div class="a" style="left:495px;top:78px;width:54px;height:16px;background:#F3F1E8"></div>
<div class="a" style="left:536px;top:79px;width:12px;height:14px;background:#EEEDE5;border-radius:2px"></div>
<svg class="ic" style="left:538px;top:84px;" width="8" height="6" viewBox="0 0 8 6"><path d="M1 1l3 3 3-3" fill="none" stroke="#C9C7BD" stroke-width="2"/></svg>
<div class="a" style="left:495px;top:78px;width:54px;height:16px;border:1px solid #E0DDD0"></div>
<svg class="a" style="left:168px;top:99px" width="904" height="466" viewBox="168 99 904 466" shape-rendering="crispEdges"><defs><linearGradient id="colg" x1="0" y1="0" x2="0" y2="1"><stop offset="0" stop-color="#8A8A8A"/><stop offset="1" stop-color="#787878"/></linearGradient></defs><rect x="168" y="99" width="904" height="466" fill="#000"/><line x1="168" y1="165.3" x2="1039" y2="102.4" stroke="#7A1626" stroke-width="1" opacity="1"/><line x1="168" y1="172.2" x2="1039" y2="107.8" stroke="#7A1626" stroke-width="1" opacity="1"/><line x1="168" y1="202.2" x2="1039" y2="138" stroke="#C02438" stroke-width="1" opacity="1"/><line x1="168" y1="239" x2="370" y2="224.4" stroke="#8A1A2A" stroke-width="1" opacity="1"/><line x1="168" y1="244.5" x2="370" y2="228.8" stroke="#8A1A2A" stroke-width="1" opacity="1"/><line x1="168" y1="114.7" x2="489.6" y2="487" stroke="#C41E2C" stroke-width="1.1" opacity="1"/><line x1="489.6" y1="487" x2="570" y2="580" stroke="#268A30" stroke-width="1" opacity="1"/><line x1="943" y1="99" x2="990" y2="151" stroke="#701624" stroke-width="1" opacity="1"/><line x1="974.3" y1="99" x2="1021" y2="151" stroke="#701624" stroke-width="1" opacity="1"/><line x1="1003.8" y1="99" x2="1049" y2="149.3" stroke="#C41E2C" stroke-width="1.1" opacity="1"/><line x1="408" y1="347.8" x2="470" y2="343.2" stroke="#C41E2C" stroke-width="1" opacity="1"/><line x1="383.5" y1="420" x2="431" y2="420.6" stroke="#C41E2C" stroke-width="1" opacity="1"/><line x1="431" y1="420.6" x2="489" y2="421.5" stroke="#268A30" stroke-width="1" opacity="1"/><line x1="277" y1="503.9" x2="1072" y2="444.6" stroke="#D02038" stroke-width="1.2" opacity="1"/><line x1="168" y1="537.6" x2="1072" y2="472.4" stroke="#268A30" stroke-width="1" opacity="1"/><line x1="168" y1="556.6" x2="1072" y2="489.3" stroke="#C41E2C" stroke-width="1" opacity="1"/><line x1="168" y1="564.4" x2="1072" y2="499.4" stroke="#268A30" stroke-width="1" opacity="1"/><line x1="492.4" y1="517.7" x2="528.7" y2="508" stroke="#268A30" stroke-width="1" opacity="1"/><polygon points="194.0,129.1 193.04,133.92 190.31,138.01 186.22,140.74 181.4,141.7 176.58,140.74 172.49,138.01 169.76,133.92 168.8,129.1 169.76,124.28 172.49,120.19 176.58,117.46 181.4,116.5 186.22,117.46 190.31,120.19 193.04,124.28" fill="none" stroke="#2C7E38" stroke-width="1"/><path d="M187.5 134.5V122.5L180.5 131H189.5" fill="none" stroke="#fff" stroke-width="1.2" stroke-linejoin="miter"/><polygon points="193.8,201.2 192.84,206.02 190.11,210.11 186.02,212.84 181.2,213.8 176.38,212.84 172.29,210.11 169.56,206.02 168.6,201.2 169.56,196.38 172.29,192.29 176.38,189.56 181.2,188.6 186.02,189.56 190.11,192.29 192.84,196.38" fill="none" stroke="#2C7E38" stroke-width="1"/><path d="M188.5 196.5L187 194.5H182L180.5 196.5V205.5L182 207.5H187L188.5 205.5" fill="none" stroke="#fff" stroke-width="1.2" stroke-linejoin="miter"/><polygon points="1030.1,112.2 1029.14,117.02 1026.41,121.11 1022.32,123.84 1017.5,124.8 1012.68,123.84 1008.59,121.11 1005.86,117.02 1004.9,112.2 1005.86,107.38 1008.59,103.29 1012.68,100.56 1017.5,99.6 1022.32,100.56 1026.41,103.29 1029.14,107.38" fill="none" stroke="#2C7E38" stroke-width="1"/><path d="M1025 105.5H1016.5V109H1023L1024.5 110.5V115.5L1022.5 117.5H1018L1016.5 115.8" fill="none" stroke="#fff" stroke-width="1.2" stroke-linejoin="miter"/><polygon points="193.9,510.1 192.94,514.92 190.21,519.01 186.12,521.74 181.3,522.7 176.48,521.74 172.39,519.01 169.66,514.92 168.7,510.1 169.66,505.28 172.39,501.19 176.48,498.46 181.3,497.5 186.12,498.46 190.21,501.19 192.94,505.28" fill="none" stroke="#2C7E38" stroke-width="1"/><path d="M180.8 503V515.6M188.2 503V515.6M180.8 511.2H188.2" fill="none" stroke="#fff" stroke-width="1.2" stroke-linejoin="miter"/><polygon points="557.8,550.5 556.84,555.32 554.11,559.41 550.02,562.14 545.2,563.1 540.38,562.14 536.29,559.41 533.56,555.32 532.6,550.5 533.56,545.68 536.29,541.59 540.38,538.86 545.2,537.9 550.02,538.86 554.11,541.59 556.84,545.68" fill="none" stroke="#2C7E38" stroke-width="1"/><path d="M550.6 557V545L545 552.5H553.5" fill="none" stroke="#fff" stroke-width="1.2" stroke-linejoin="miter"/><polygon points="168,344.6 408,346.8 274.5,455.2 168,461.5" fill="#ADADAD"/><polygon points="168,461.5 274.5,455.2 276,504 168,511" fill="#979797"/><polygon points="274.5,455.2 408,346.8 410,396 277,503.8 276,504" fill="#8A8A8A"/><polygon points="1039,99 1072,99 1072,148.4 1049,149.3 1039,138" fill="url(#colg)"/><polygon points="366.4,175 1049,149.3 1072,148.4 1072,286 480,308" fill="#ADADAD"/><polygon points="366.4,175 480,308 483,357 367.8,224.4" fill="#848484"/><polygon points="480,308 1072,286 1072,336.3 483,357" fill="#8E8E8E"/><polygon points="536.4,252.6 737.3,246.2 766.4,279.2 565.8,286.8" fill="#8C8C8C"/><polygon points="737.3,246.2 766.4,279.2 738,279.8" fill="#7D7D7D"/><line x1="780.6" y1="220.5" x2="1072" y2="209.5" stroke="#5C5C5C" stroke-width="1.4" opacity="1"/><rect x="777.5" y="243.5" width="1.2" height="1.2" fill="#333"/><polygon points="485,357 526,355.5 531.6,500.7 533.4,501.5 489.4,450.4" fill="#9F009F"/><polygon points="526,355.5 828.5,344.9 833.8,480.2 533.4,501.5 531.6,500.7" fill="#B100B1"/><line x1="470" y1="489.5" x2="1072" y2="444.6" stroke="#D81E50" stroke-width="1.3" opacity="1"/><path d="M222 514 L222 478" stroke="#1E8CFF" stroke-width="3.5"/><path d="M216.5 479 L221 464.5 L226 479z" fill="#1E8CFF"/><path d="M207.5 461h8l-8 10h8" fill="none" stroke="#3F7FD8" stroke-width="1.3"/><path d="M223 513.5 L260 511.5" stroke="#FF2020" stroke-width="4"/><path d="M258 505.5 L272 511.2 L258 517z" fill="#FF2020"/><path d="M257 504l8 8M265 504l-8 8" stroke="#FF3030" stroke-width="1"/><path d="M217 509 L222 514 L226 509" fill="none" stroke="#30D040" stroke-width="2"/><path d="M227 503l3 4 3-4M230 507v4" fill="none" stroke="#30C040" stroke-width="1"/><path d="M893 468.5H899L900.5 470.3V472.2L899 474H893L891.5 472.2V470.3ZM893 474H899L900.8 476.2V479.6L899 481.3H893L891.2 479.6V476.2ZM905.2 468.5H908.7L910.4000000000001 470.8V479L908.4000000000001 481.4H905.4000000000001L903.5 479V470.8ZM915.1 468.5H918.6L920.3000000000001 470.8V479L918.3000000000001 481.4H915.3000000000001L913.4 479V470.8ZM924.5 468.5H928.0L929.7 470.8V479L927.7 481.4H924.7L922.8 479V470.8Z" fill="none" stroke="#fff" stroke-width="1.2" stroke-linejoin="miter"/></svg>
<div class="tb" style="left:168px;top:565px;width:867px;height:26px"></div>
<div class="grip" style="left:171px;top:569px;height:17px"></div>
<svg class="ic" style="left:178px;top:569px;" width="17" height="17" viewBox="0 0 17 17"><path d="M2 2h11M4 2v13" stroke="#E0A0A8" stroke-width="3"/><circle cx="11" cy="11" r="3" fill="none" stroke="#6A7A9A" stroke-width="1.2"/><path d="M13 13l3 3" stroke="#6A7A9A" stroke-width="1.5"/></svg>
<div class="t " style="left:199px;top:572px;">正交</div>
<div class="btn" style="left:227px;top:568px;width:75px;height:21px"></div>
<svg class="ic" style="left:231px;top:570px;" width="16" height="16" viewBox="0 0 16 16"><path d="M2 1v15M14 1v15M0 8h16" stroke="#5A5A5A" stroke-width="1.2"/><ellipse cx="9" cy="11" rx="5" ry="4" fill="#E9C760" stroke="#A8852A"/></svg>
<div class="t " style="left:250px;top:572px;">对象捕捉</div>
<div class="btn" style="left:303px;top:568px;width:75px;height:21px"></div>
<svg class="ic" style="left:306px;top:570px;" width="16" height="16" viewBox="0 0 16 16"><rect x="0.5" y="1.5" width="15" height="13" fill="#F5F5F5" stroke="#555"/><path d="M2 4h12M2 7h12" stroke="#777"/><text x="4" y="14" font-size="6" font-family="Liberation Sans" fill="#000">12</text></svg>
<div class="t " style="left:325px;top:572px;">动态输入</div>
<div class="grip" style="left:381px;top:569px;height:17px"></div>
<svg class="ic" style="left:390px;top:570px;" width="15" height="15" viewBox="0 0 15 15"><path d="M1 1l12 12M13 1L1 13" stroke="#6F8FCF" stroke-width="1.5"/><rect x="5" y="5" width="4" height="4" fill="#1F3F8F"/></svg>
<div class="t " style="left:409px;top:572px;">交点</div>
<div class="btn" style="left:438px;top:568px;width:51px;height:21px"></div>
<svg class="ic" style="left:441px;top:571px;" width="15" height="15" viewBox="0 0 15 15"><path d="M8 0v12M0 12h14" stroke="#3A5CA8" stroke-width="1.5"/><rect x="6" y="10" width="4" height="4" fill="#1F3F8F"/></svg>
<div class="t " style="left:459px;top:572px;">垂点</div>
<div class="btn" style="left:489px;top:568px;width:51px;height:21px"></div>
<svg class="ic" style="left:493px;top:571px;" width="15" height="15" viewBox="0 0 15 15"><path d="M0 7h14" stroke="#3A5CA8" stroke-width="1.5"/><rect x="5" y="5" width="4" height="4" fill="#1F3F8F"/></svg>
<div class="t " style="left:511px;top:572px;">中点</div>
<div class="btn" style="left:540px;top:568px;width:51px;height:21px"></div>
<svg class="ic" style="left:545px;top:570px;" width="15" height="15" viewBox="0 0 15 15"><path d="M7.5 1L14 6l-2.5 8h-8L1 6z" fill="none" stroke="#2F4F9F" stroke-width="1.5"/></svg>
<div class="t " style="left:564px;top:572px;">顶点</div>
<svg class="ic" style="left:594px;top:570px;" width="17" height="16" viewBox="0 0 17 16"><path d="M3 1v14h13" fill="none" stroke="#8A9ABC" stroke-dasharray="2 1"/><path d="M5 13l4-5 3 2 3-6" fill="none" stroke="#7A8ABC"/><path d="M11 1l3 3M14 1l-3 3" stroke="#777"/></svg>
<div class="t " style="left:613px;top:572px;">坐标</div>
<div class="grip" style="left:646px;top:569px;height:17px"></div>
<div class="a" style="left:652px;top:569px;width:58px;height:17px;background:#fff"></div>
<div class="t " style="left:655px;top:571px;">不偏移</div>
<div class="a" style="left:697px;top:570px;width:12px;height:15px;background:linear-gradient(#D5DFF7,#B3C6EE);border-radius:2px"></div>
<svg class="ic" style="left:699px;top:575px;" width="8" height="6" viewBox="0 0 8 6"><path d="M1 1l3 3 3-3" fill="none" stroke="#4D6185" stroke-width="2"/></svg>
<div class="sep" style="left:716px;top:569px;height:18px"></div>
<div class="t m d" style="left:718px;top:571px">X=</div>
<div class="a" style="left:734px;top:569px;width:56px;height:18px;background:#F2F0E7;border:1px solid #E3E0D3"></div>
<div class="a" style="left:777px;top:570px;width:12px;height:16px;background:#EDEBE2;border-left:1px solid #E0DDD0"></div>
<svg class="ic" style="left:779px;top:571px;" width="8" height="14" viewBox="0 0 8 14"><path d="M1 5l3-3 3 3M1 9l3 3 3-3" fill="none" stroke="#C9C6BA" stroke-width="1.3"/></svg>
<div class="t m d" style="left:765px;top:571px">0</div>
<div class="t m d" style="left:791px;top:573px">mm</div>
<div class="t m d" style="left:810px;top:571px">Y=</div>
<div class="a" style="left:825px;top:569px;width:56px;height:18px;background:#F2F0E7;border:1px solid #E3E0D3"></div>
<div class="a" style="left:868px;top:570px;width:12px;height:16px;background:#EDEBE2;border-left:1px solid #E0DDD0"></div>
<svg class="ic" style="left:870px;top:571px;" width="8" height="14" viewBox="0 0 8 14"><path d="M1 5l3-3 3 3M1 9l3 3 3-3" fill="none" stroke="#C9C6BA" stroke-width="1.3"/></svg>
<div class="t m d" style="left:857px;top:571px">0</div>
<div class="t m d" style="left:882px;top:573px">mm</div>
<div class="sep" style="left:898px;top:569px;height:18px"></div>
<div class="a" style="left:902px;top:571px;width:13px;height:13px;border:1px solid #1C5180;background:linear-gradient(135deg,#DCDCD7,#FFFFFF)"></div>
<div class="t " style="left:922px;top:571px;">旋转</div>
<div class="a" style="left:952px;top:569px;width:66px;height:18px;background:#F2F0E7;border:1px solid #E3E0D3"></div>
<div class="a" style="left:1005px;top:570px;width:12px;height:16px;background:#EDEBE2;border-left:1px solid #E0DDD0"></div>
<svg class="ic" style="left:1007px;top:571px;" width="8" height="14" viewBox="0 0 8 14"><path d="M1 5l3-3 3 3M1 9l3 3 3-3" fill="none" stroke="#C9C6BA" stroke-width="1.3"/></svg>
<div class="t m d" style="left:970px;top:571px">0.000</div>
<div class="t m d" style="left:1020px;top:569px;font-size:9px">&deg;</div>
<div class="a" style="left:164px;top:591px;width:908px;height:202px;background:#ECE9D8"></div>
<svg class="ic" style="left:170px;top:595px;" width="9" height="9" viewBox="0 0 9 9"><rect x="0" y="0" width="9" height="9" rx="2" fill="#E04A3A"/><path d="M2.5 2.5l4 4M6.5 2.5l-4 4" stroke="#fff" stroke-width="1.3"/></svg>
<div class="a" style="left:173px;top:606px;width:2px;height:185px;background:repeating-linear-gradient(#B0AC98 0 1px,transparent 1px 3px)"></div>
<div class="a" style="left:181px;top:592px;width:891px;height:27px;background:linear-gradient(#ECE9DC,#F5F4EE 45%,#F3F1EA 70%,#E9E6D8)"></div>
<svg class="ic" style="left:187px;top:602px;" width="9" height="11" viewBox="0 0 9 11"><path d="M1 0v11" stroke="#C5C2B5" stroke-width="2"/><path d="M9 0L3 5.5 9 11z" fill="#C5C2B5"/></svg>
<svg class="ic" style="left:212px;top:602px;" width="7" height="11" viewBox="0 0 7 11"><path d="M7 0L1 5.5 7 11z" fill="#C5C2B5"/></svg>
<svg class="ic" style="left:236px;top:602px;" width="7" height="11" viewBox="0 0 7 11"><path d="M0 0l6 5.5L0 11z" fill="#C5C2B5"/></svg>
<svg class="ic" style="left:258px;top:602px;" width="9" height="11" viewBox="0 0 9 11"><path d="M8 0v11" stroke="#C5C2B5" stroke-width="2"/><path d="M0 0l6 5.5L0 11z" fill="#C5C2B5"/></svg>
<div class="sep" style="left:277px;top:598px;height:18px"></div>
<svg class="ic" style="left:285px;top:602px;" width="9" height="10" viewBox="0 0 9 10"><path d="M4.5 0L9 5H6v5H3V5H0z" fill="#C5C2B5"/></svg>
<svg class="ic" style="left:308px;top:602px;" width="9" height="10" viewBox="0 0 9 10"><path d="M4.5 10L9 5H6V0H3v5H0z" fill="#C5C2B5"/></svg>
<div class="sep" style="left:328px;top:598px;height:18px"></div>
<svg class="ic" style="left:335px;top:599px;" width="16" height="16" viewBox="0 0 16 16"><path d="M1 1h4M1 1v14h4M5 8h4" stroke="#C5C2B5" stroke-width="1.3" fill="none"/><rect x="9" y="6" width="5" height="4" fill="none" stroke="#C5C2B5"/></svg>
<div class="t d" style="left:355px;top:601px;">插入</div>
<svg class="ic" style="left:385px;top:599px;" width="16" height="16" viewBox="0 0 16 16"><path d="M0 3h10M0 8h14M0 13h10" stroke="#C5C2B5" stroke-width="1.5"/><path d="M12 6l2 2-2 2" fill="none" stroke="#C5C2B5"/></svg>
<div class="t d" style="left:406px;top:601px;">删除</div>
<svg class="ic" style="left:438px;top:599px;" width="16" height="16" viewBox="0 0 16 16"><path d="M1 4v11h11" fill="none" stroke="#C5C2B5" stroke-width="1.5" stroke-dasharray="2 1"/><path d="M10 1h3v3" fill="none" stroke="#C5C2B5"/></svg>
<div class="t d" style="left:456px;top:601px;">缩尺配筋</div>
<svg class="ic" style="left:511px;top:599px;" width="16" height="16" viewBox="0 0 16 16"><path d="M1 12l5-9 8 2-3 10z" fill="#E5E3DA" stroke="#C5C2B5"/><circle cx="8" cy="9" r="3" fill="none" stroke="#C5C2B5"/></svg>
<div class="t d" style="left:531px;top:601px;">钢筋信息</div>
<svg class="ic" style="left:587px;top:599px;" width="16" height="16" viewBox="0 0 16 16"><rect x="1" y="1" width="10" height="13" fill="#F4F6FA" stroke="#7A8DB8"/><path d="M3 4h6M3 7h6M3 10h4" stroke="#7A8DB8"/><path d="M7 8h5V5l4 4.5-4 4.5v-3H7z" fill="#4A78D0"/></svg>
<div class="t " style="left:606px;top:601px;">其他</div>
<div class="tri" style="left:635px;top:608px;border-top-color:#000"></div>
<div class="t " style="left:647px;top:601px;">关闭</div>
<div class="sep" style="left:679px;top:598px;height:18px"></div>
<div class="t" style="left:689px;top:601px">单构件钢筋总重<span class="m">(kg)</span>：<span class="m">0</span></div>
<div class="a" style="left:181px;top:620px;width:891px;height:173px;background:#fff;border-top:1px solid #A7A495"></div>
<div class="a" style="left:181px;top:621px;width:891px;height:20px;background:linear-gradient(#FFFFFF,#F6F5F0 60%,#E9E7DE);border-bottom:1px solid #D4D1C4"></div>
<div class="a" style="left:288px;top:621px;width:55px;height:19px;background:linear-gradient(#FAD89E,#F5C47A)"></div>
<div class="a" style="left:214px;top:622px;width:1px;height:37px;background:#A9ACAE"></div>
<div class="t" style="left:214px;top:624px;width:73px;text-align:center">筋号</div>
<div class="a" style="left:287px;top:622px;width:1px;height:37px;background:#A9ACAE"></div>
<div class="t" style="left:287px;top:624px;width:56px;text-align:center">直径<span class="m">(mm)</span></div>
<div class="a" style="left:343px;top:622px;width:1px;height:37px;background:#A9ACAE"></div>
<div class="t" style="left:343px;top:624px;width:36px;text-align:center">级别</div>
<div class="a" style="left:379px;top:622px;width:1px;height:37px;background:#A9ACAE"></div>
<div class="t" style="left:379px;top:624px;width:33px;text-align:center">图号</div>
<div class="a" style="left:412px;top:622px;width:1px;height:37px;background:#A9ACAE"></div>
<div class="t" style="left:412px;top:624px;width:201px;text-align:center">图形</div>
<div class="a" style="left:613px;top:622px;width:1px;height:37px;background:#A9ACAE"></div>
<div class="t" style="left:613px;top:624px;width:166px;text-align:center">计算公式</div>
<div class="a" style="left:779px;top:622px;width:1px;height:37px;background:#A9ACAE"></div>
<div class="t" style="left:779px;top:624px;width:156px;text-align:center">公式描述</div>
<div class="a" style="left:935px;top:622px;width:1px;height:37px;background:#A9ACAE"></div>
<div class="t" style="left:935px;top:624px;width:61px;text-align:center">长度<span class="m">(mm)</span></div>
<div class="a" style="left:996px;top:622px;width:1px;height:37px;background:#A9ACAE"></div>
<div class="t" style="left:996px;top:624px;width:38px;text-align:center">根数</div>
<div class="a" style="left:1034px;top:622px;width:1px;height:37px;background:#A9ACAE"></div>
<div class="t" style="left:1034px;top:624px;width:38px;text-align:center">搭接</div>
<div class="a" style="left:181px;top:659px;width:891px;height:1px;background:#D4D0C8"></div>
<div class="a" style="left:182px;top:641px;width:32px;height:18px;background:#FBCB86"></div>
<div class="t m" style="left:192px;top:643px;font-size:11px">1<span style="position:relative;top:2px">*</span></div>
<div class="a" style="left:180px;top:620px;width:1px;height:173px;background:#8E9296"></div>
<div class="a" style="left:289px;top:641px;width:54px;height:18px;background:#DDE6F4"></div>
<div class="a" style="left:287px;top:641px;width:2px;height:18px;background:#111"></div>
<div class="a" style="left:0;top:793px;width:1072px;height:14px;background:#ECE9D8;border-top:1px solid #9D9A8C"></div>
<div class="a" style="left:108px;top:796px;width:1px;height:11px;background:#CDC9B8"></div>
<div class="a" style="left:188px;top:796px;width:1px;height:11px;background:#CDC9B8"></div>
<div class="a" style="left:289px;top:796px;width:1px;height:11px;background:#CDC9B8"></div>
<div class="a" style="left:338px;top:796px;width:1px;height:11px;background:#CDC9B8"></div>
<div class="t m" style="left:0;top:799px">9 Y=30440</div>
<div class="t" style="left:112px;top:799px">层高<span class="m">:1.8m</span></div>
<div class="t" style="left:192px;top:799px">底标高<span class="m">:-1.8m</span></div>
<div class="t m" style="left:292px;top:799px">0</div>
<div class="t " style="left:342px;top:799px;">按鼠标左键指定第一个角点，或拾取构件图元</div>
</body></html>
